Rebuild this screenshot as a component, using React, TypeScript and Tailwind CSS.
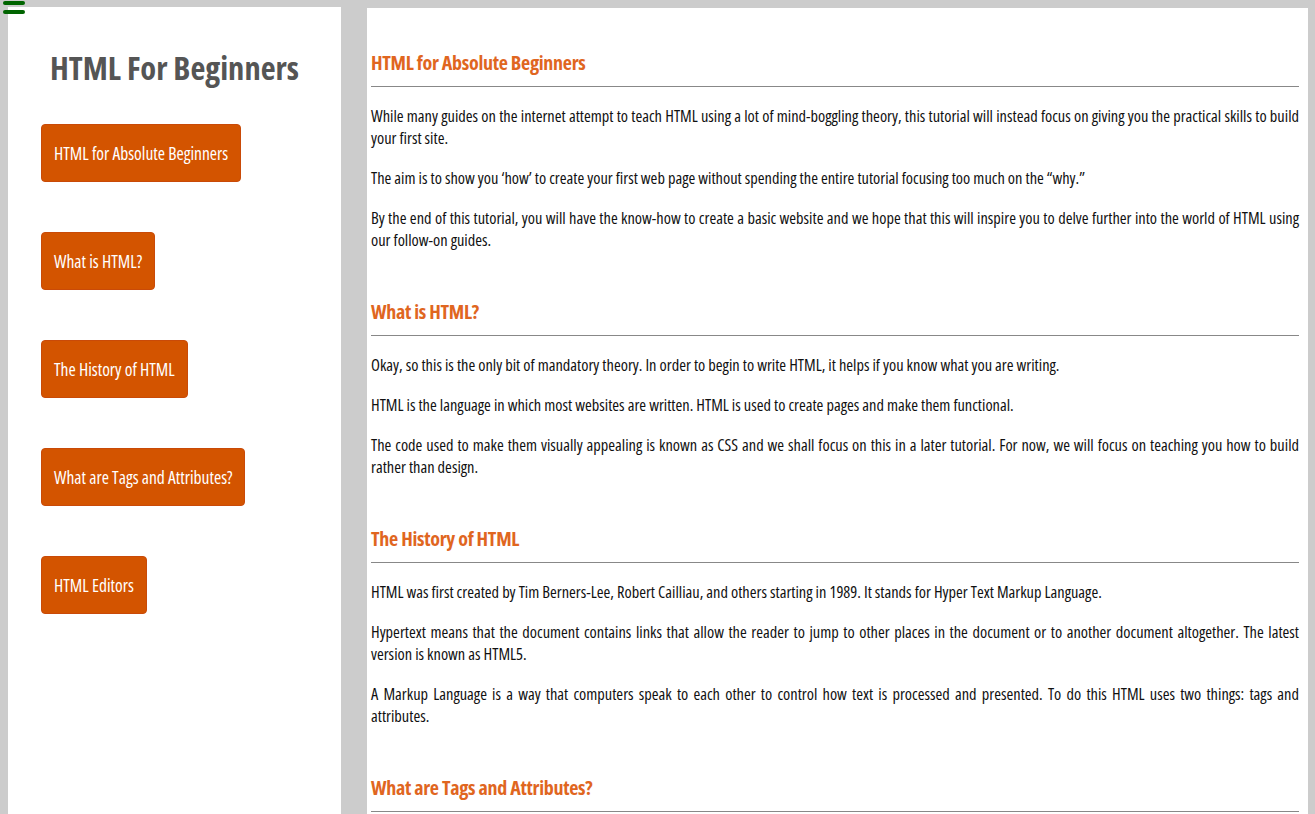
import React from 'react'

const sections = [
	{
		title: 'HTML for Absolute Beginners',
		paras: [
			'While many guides on the internet attempt to teach HTML using a lot of mind-boggling theory, this tutorial will instead focus on giving you the practical skills to build your first site.',
			'The aim is to show you \u2018how\u2019 to create your first web page without spending the entire tutorial focusing too much on the \u201cwhy.\u201d',
			'By the end of this tutorial, you will have the know-how to create a basic website and we hope that this will inspire you to delve further into the world of HTML using our follow-on guides.',
		],
	},
	{
		title: 'What is HTML?',
		paras: [
			'Okay, so this is the only bit of mandatory theory. In order to begin to write HTML, it helps if you know what you are writing.',
			'HTML is the language in which most websites are written. HTML is used to create pages and make them functional.',
			'The code used to make them visually appealing is known as CSS and we shall focus on this in a later tutorial. For now, we will focus on teaching you how to build rather than design.',
		],
	},
	{
		title: 'The History of HTML',
		paras: [
			'HTML was first created by Tim Berners-Lee, Robert Cailliau, and others starting in 1989. It stands for Hyper Text Markup Language.',
			'Hypertext means that the document contains links that allow the reader to jump to other places in the document or to another document altogether. The latest version is known as HTML5.',
			'A Markup Language is a way that computers speak to each other to control how text is processed and presented. To do this HTML uses two things: tags and attributes.',
		],
	},
	{
		title: 'What are Tags and Attributes?',
		paras: [
			'Tags and attributes are the basis of HTML. They work together but perform different functions \u2013 it is worth investing 2 minutes in differentiating the two.',
		],
	},
]

const links = ['HTML for Absolute Beginners', 'What is HTML?', 'The History of HTML', 'What are Tags and Attributes?', 'HTML Editors']

const App = () => {
	return (
		<div className="relative min-h-screen bg-[#cccccc] font-['Open_Sans',sans-serif] [font-stretch:75%]">
			{/* menu toggle */}
			<div className="absolute left-[3px] top-[1px] flex flex-col gap-[5px]">
				<span className="block h-[4px] w-[22px] rounded-full bg-[#006400]" />
				<span className="block h-[4px] w-[22px] rounded-full bg-[#006400]" />
			</div>
			<div className="flex items-stretch gap-[26px] pl-[8px] pr-[7px] pt-[7px]">
				<aside className="w-[333px] shrink-0 bg-white px-[33px] pt-[40px]">
					<h1 className="whitespace-nowrap text-center text-[32.5px] font-bold leading-[41px] text-[#555555]">HTML For Beginners</h1>
					<nav className="mt-[36px] flex flex-col items-start gap-[50px]">
						{links.map((l) => (
							<a key={l} href="#" className="flex h-[58px] items-center rounded-[4px] border border-[#c94a08] bg-[#d35400] px-[12px] text-[17.5px] text-white">
								{l}
							</a>
						))}
					</nav>
				</aside>
				<main className="mt-[1px] flex-1 bg-white pb-[40px] pl-[4px] pr-[9px] pt-[43px]">
					{sections.map((s) => (
						<section key={s.title} className="mb-[49px]">
							<h2 className="text-[20px] font-bold leading-[24px] tracking-[-0.3px] text-[#e0661f]">{s.title}</h2>
							<hr className="mt-[11px] border-t border-[#888888]" />
							<div className="mt-[18px] flex flex-col gap-[18px] text-justify text-[16.4px] leading-[22px] text-[#111111]">
								{s.paras.map((p, i) => (
									<p key={i}>{p}</p>
								))}
							</div>
						</section>
					))}
				</main>
			</div>
		</div>
	)
}

export default App
